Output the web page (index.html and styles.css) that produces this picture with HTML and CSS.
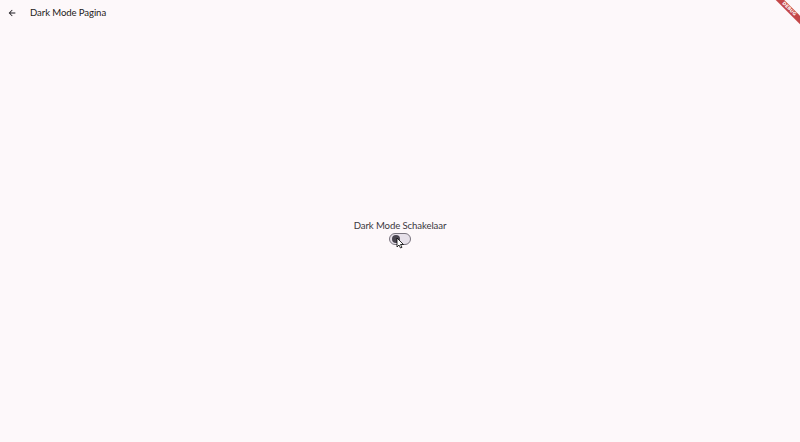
FILE: index.html
```html
<!DOCTYPE html>
<html>
<head>
<meta charset="utf-8">
<link rel="stylesheet" href="styles.css">
</head>
<body>
<div class="app">
  <header class="appbar">
    <span class="back">
      <svg width="10" height="10" viewBox="0 0 24 24"><path d="M20 11H7.83l5.59-5.59L12 4l-8 8 8 8 1.41-1.41L7.83 13H20v-2z" fill="#1d1b20"/></svg>
    </span>
    <span class="title">Dark Mode Pagina</span>
  </header>
  <main class="body">
    <div class="center">
      <div class="label">Dark Mode Schakelaar</div>
      <div class="switch">
        <span class="thumb"></span>
        <svg class="cursor" width="9" height="12" viewBox="0 0 9 12"><path d="M1 1v9l2-2 1.5 3 1.5-.7L4.5 7.5H7.5z" fill="#fff" stroke="#000" stroke-width="0.8"/></svg>
      </div>
    </div>
  </main>
  <div class="banner"><span>DEBUG</span></div>
</div>
</body>
</html>
```
FILE: styles.css
```css
html, body {
  margin: 0;
  padding: 0;
  width: 800px;
  height: 442px;
  overflow: hidden;
  background: #fdf8fa;
  font-family: Lato, "Open Sans", sans-serif;
}
.app {
  position: relative;
  width: 800px;
  height: 442px;
  display: flex;
  flex-direction: column;
}
.appbar {
  height: 26px;
  display: flex;
  align-items: center;
  padding-left: 7px;
  flex-shrink: 0;
}
.back {
  width: 10px;
  height: 10px;
  display: flex;
}
.title {
  margin-left: 13px;
  font-size: 9.6px;
  letter-spacing: -0.1px;
  color: #1d1b20;
  line-height: 1;
}
.body {
  flex: 1;
  display: flex;
  align-items: center;
  justify-content: center;
}
.center {
  display: flex;
  flex-direction: column;
  align-items: center;
  margin-top: -4px;
}
.label {
  font-size: 9.6px;
  letter-spacing: -0.1px;
  color: #3a373d;
  line-height: 13px;
}
.switch {
  position: relative;
  margin-top: 1px;
  width: 20px;
  height: 10px;
  border: 1px solid #79747e;
  border-radius: 7px;
  background: #e6e0e9;
  box-sizing: content-box;
}
.thumb {
  position: absolute;
  left: 2px;
  top: 1px;
  width: 8px;
  height: 8px;
  border-radius: 50%;
  background: #49454f;
}
.cursor {
  position: absolute;
  left: 6px;
  top: 3px;
}
.banner {
  position: absolute;
  top: 0;
  right: 0;
  width: 40px;
  height: 40px;
  overflow: hidden;
}
.banner span {
  position: absolute;
  top: 6px;
  right: -11px;
  width: 44px;
  height: 6px;
  background: #b71c1c;
  opacity: 0.8;
  color: #fff;
  font-family: "DejaVu Sans", sans-serif;
  font-weight: bold;
  font-size: 4.5px;
  line-height: 6px;
  text-align: center;
  transform: rotate(45deg);
}
```
